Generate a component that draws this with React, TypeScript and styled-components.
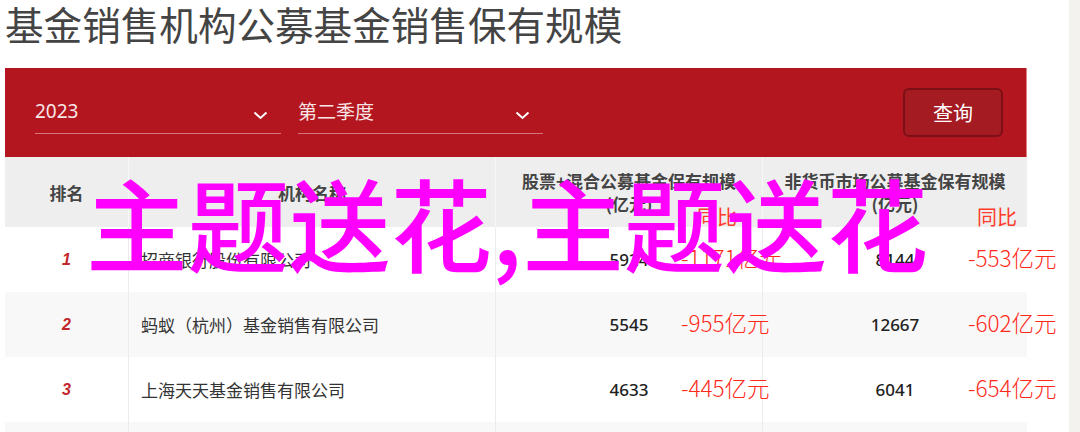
import React from 'react';
import styled, { createGlobalStyle } from 'styled-components';

const GlobalStyle = createGlobalStyle`
  body {
    margin: 0;
    background: #ffffff;
    font-family: 'Noto Sans', 'Noto Sans CJK SC', sans-serif;
  }
`;

const Page = styled.div`
  position: relative;
  display: flex;
  width: 1080px;
  height: 432px;
  overflow: hidden;
`;

const Main = styled.main`
  width: 1069px;
  padding-left: 5px;
  box-sizing: border-box;
`;

const SideStrip = styled.aside`
  flex: 1;
  background: #f3f2ef;
`;

const Title = styled.h1`
  margin: 0;
  height: 68px;
  font-family: 'Noto Sans CJK SC', sans-serif;
  font-size: 38.6px;
  font-weight: 400;
  line-height: 46px;
  color: #444444;
`;

const FilterBar = styled.div`
  display: flex;
  align-items: center;
  gap: 17px;
  width: 1022px;
  height: 89px;
  padding: 0 23px 0 30px;
  box-sizing: border-box;
  background: #b3161f;
  border-right: 1px solid #e07f84;
`;

const Select = styled.div<{ $width: number }>`
  display: flex;
  align-items: center;
  justify-content: space-between;
  width: ${(p) => p.$width}px;
  height: 43px;
  padding-bottom: 3px;
  box-sizing: border-box;
  border-bottom: 1px solid rgba(255, 255, 255, 0.42);
  font-family: 'Noto Sans', 'Noto Sans CJK SC', sans-serif;
  font-size: 19px;
  color: #f8e6e7;

  svg {
    margin-right: 13px;
    margin-top: 10px;
  }
`;

const QueryButton = styled.button`
  margin-left: auto;
  width: 100px;
  height: 49px;
  background: #a41b22;
  border: 2px solid #7c1016;
  border-radius: 6px;
  font-family: 'Noto Sans CJK SC', sans-serif;
  font-size: 20px;
  color: #ffffff;
`;

const Table = styled.div`
  width: 1022px;
`;

const COLUMNS = '124px 367px 267px 264px';

const HeaderRow = styled.div`
  display: grid;
  grid-template-columns: ${COLUMNS};
  height: 70px;
  background: #eeeeee;
`;

const HeaderCell = styled.div`
  position: relative;
  display: flex;
  flex-direction: column;
  align-items: center;
  justify-content: center;
  border-right: 1px solid #f7f7f7;
  font-family: 'Noto Sans CJK SC', sans-serif;
  font-size: 17px;
  font-weight: 700;
  line-height: 23px;
  color: #444444;

  &:last-child {
    border-right: none;
  }
`;

const YoyLabel = styled.span<{ $left: number }>`
  position: absolute;
  left: ${(p) => p.$left}px;
  top: 49px;
  font-family: 'Noto Sans CJK SC', sans-serif;
  font-size: 20px;
  font-weight: 400;
  line-height: 22px;
  color: #ff3b2b;
  white-space: nowrap;
`;

const BodyRow = styled.div<{ $striped: boolean }>`
  display: grid;
  grid-template-columns: ${COLUMNS};
  height: 65px;
  background: ${(p) => (p.$striped ? '#f8f8f8' : '#ffffff')};
`;

const Cell = styled.div<{ $align?: 'left' | 'center' }>`
  position: relative;
  display: flex;
  align-items: center;
  justify-content: ${(p) => (p.$align === 'left' ? 'flex-start' : 'center')};
  padding-left: ${(p) => (p.$align === 'left' ? '12px' : '0')};
  border-right: 1px solid #ececec;

  &:last-child {
    border-right: none;
  }
`;

const Rank = styled.span`
  font-family: 'Liberation Sans', Arial, sans-serif;
  font-size: 16px;
  font-weight: 700;
  font-style: italic;
  color: #c1272d;
`;

const Company = styled.span`
  font-family: 'Noto Sans CJK SC', sans-serif;
  font-size: 17px;
  color: #333333;
`;

const Amount = styled.span`
  font-family: 'Noto Sans', sans-serif;
  font-size: 17px;
  font-weight: 500;
  color: #222222;
`;

const Delta = styled.span<{ $left: number }>`
  position: absolute;
  left: ${(p) => p.$left}px;
  top: 50%;
  transform: translateY(-58%);
  font-family: 'Noto Sans CJK SC', sans-serif;
  font-size: 22.5px;
  font-weight: 300;
  color: #ff2a1a;
  white-space: nowrap;
`;

const Watermark = styled.div`
  position: absolute;
  left: 86px;
  top: 170px;
  font-family: 'Noto Sans CJK SC', sans-serif;
  font-size: 101.5px;
  font-weight: 500;
  line-height: 1;
  color: #ff00ff;
  white-space: nowrap;
  pointer-events: none;
`;

function Chevron() {
  return (
    <svg width="15" height="9" viewBox="0 0 15 9">
      <polyline
        points="1.5,1.5 7.5,7 13.5,1.5"
        fill="none"
        stroke="#ffffff"
        strokeWidth="2"
      />
    </svg>
  );
}

const rows = [
  { rank: '1', name: '招商银行股份有限公司', stock: '5924', stockYoy: '-1171亿元', nonMoney: '8144', nonMoneyYoy: '-553亿元' },
  { rank: '2', name: '蚂蚁（杭州）基金销售有限公司', stock: '5545', stockYoy: '-955亿元', nonMoney: '12667', nonMoneyYoy: '-602亿元' },
  { rank: '3', name: '上海天天基金销售有限公司', stock: '4633', stockYoy: '-445亿元', nonMoney: '6041', nonMoneyYoy: '-654亿元' },
  { rank: '4', name: '中国工商银行股份有限公司', stock: '4342', stockYoy: '-587亿元', nonMoney: '4831', nonMoneyYoy: '-449亿元' },
];

export default function App() {
  return (
    <Page>
      <GlobalStyle />
      <Main>
        <Title>基金销售机构公募基金销售保有规模</Title>
        <FilterBar>
          <Select $width={246}>
            2023
            <Chevron />
          </Select>
          <Select $width={245}>
            第二季度
            <Chevron />
          </Select>
          <QueryButton>查询</QueryButton>
        </FilterBar>
        <Table>
          <HeaderRow>
            <HeaderCell>排名</HeaderCell>
            <HeaderCell>机构名称</HeaderCell>
            <HeaderCell>
              <span>股票+混合公募基金保有规模</span>
              <span>(亿元)</span>
              <YoyLabel $left={201}>同比</YoyLabel>
            </HeaderCell>
            <HeaderCell>
              <span>非货币市场公募基金保有规模</span>
              <span>(亿元)</span>
              <YoyLabel $left={214}>同比</YoyLabel>
            </HeaderCell>
          </HeaderRow>
          {rows.map((r, i) => (
            <BodyRow key={r.rank} $striped={i % 2 === 1}>
              <Cell>
                <Rank>{r.rank}</Rank>
              </Cell>
              <Cell $align="left">
                <Company>{r.name}</Company>
              </Cell>
              <Cell>
                <Amount>{r.stock}</Amount>
                <Delta $left={185}>{r.stockYoy}</Delta>
              </Cell>
              <Cell>
                <Amount>{r.nonMoney}</Amount>
                <Delta $left={205}>{r.nonMoneyYoy}</Delta>
              </Cell>
            </BodyRow>
          ))}
        </Table>
      </Main>
      <SideStrip />
      <Watermark>主题送花,主题送花</Watermark>
    </Page>
  );
}
